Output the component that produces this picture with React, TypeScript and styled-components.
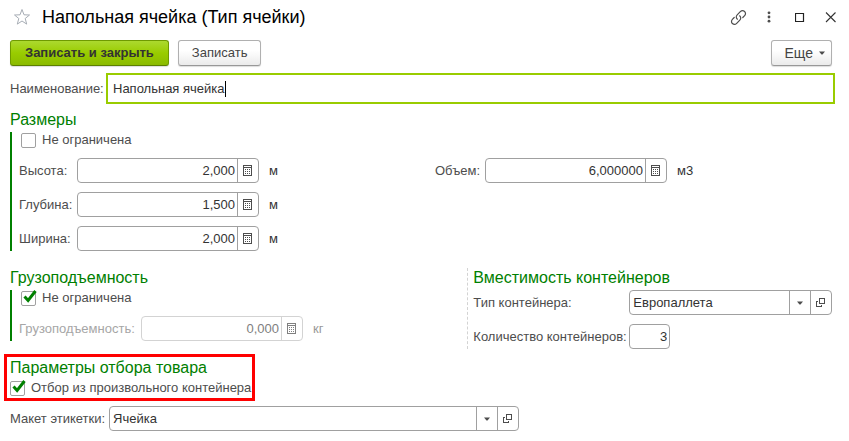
import React, { useState } from "react";
import styled, { createGlobalStyle, css } from "styled-components";

const GlobalStyle = createGlobalStyle`
  *, *::before, *::after { box-sizing: border-box; }
  body { margin: 0; background: #fff; }
  body, button, input, select {
    font-family: "Liberation Sans", Arial, sans-serif;
    font-size: 13px;
    line-height: 16px;
    color: #333;
  }
`;

const green = "#008000";
const lime = "#99cc00";
const line = "#a0a0a0";

const Form = styled.form`
  display: flex;
  flex-direction: column;
  padding: 4px 14px 10px 10px;
`;

const TitleBar = styled.header`
  display: flex;
  align-items: center;
  height: 26px;
  margin-bottom: 10px;
`;

const Title = styled.h1`
  flex: 1;
  margin: 0 0 0 8px;
  font-size: 18px;
  line-height: 24px;
  font-weight: 400;
  color: #000;
`;

const IconButton = styled.button`
  display: flex;
  align-items: center;
  justify-content: center;
  width: 24px;
  height: 24px;
  padding: 0;
  border: 0;
  background: none;
  color: #4d4d4d;
`;

const WindowButtons = styled.div`
  display: flex;
  gap: 7px;
  margin-right: -8px;
`;

const Toolbar = styled.div`
  display: flex;
  gap: 9px;
  margin-bottom: 7px;
  padding-right: 3px;
`;

const Button = styled.button<{ $primary?: boolean; $end?: boolean }>`
  display: flex;
  align-items: center;
  justify-content: center;
  gap: 6px;
  height: 26px;
  padding: 0 13px;
  border: 1px solid #b0b0b0;
  border-bottom-color: #989898;
  border-radius: 3px;
  background: linear-gradient(#fff 40%, #ebebeb);
  box-shadow: 0 1px 1px #ddd;
  color: #444;
  ${(p) =>
    p.$primary &&
    css`
      padding: 0 14px;
      border-color: #6f9a00;
      border-bottom-color: #5c7f00;
      background: linear-gradient(#acd92f, #99cc00 50%, #8bbb00);
      font-weight: 700;
      color: #333;
    `}
  ${(p) =>
    p.$end &&
    css`
      margin-left: auto;
      padding: 0 6px 0 13px;
      font-size: 14px;
    `}
`;

const Row = styled.div`
  display: flex;
  align-items: center;
`;

const Label = styled.label<{ $width?: number; $muted?: boolean }>`
  flex: none;
  width: ${(p) => (p.$width ? p.$width + "px" : "auto")};
  white-space: nowrap;
  color: ${(p) => (p.$muted ? "#a6a6a6" : "#4d4d4d")};
`;

const NameBox = styled.div`
  display: flex;
  align-items: center;
  flex: 1;
  min-width: 0;
  height: 31px;
  padding: 0 5px;
  border: 2px solid ${lime};
`;

const NameInput = styled.input`
  field-sizing: content;
  min-width: 0;
  padding: 0;
  border: 0;
  outline: 0;
  background: none;
  caret-color: transparent;
`;

const Caret = styled.span`
  width: 1px;
  height: 16px;
  background: #000;
`;

const Heading = styled.h2`
  margin: 0;
  font-size: 16px;
  line-height: 20px;
  font-weight: 400;
  color: ${green};
`;

const Section = styled.section`
  margin-top: 6px;
`;

const Barred = styled.div`
  margin-top: 2px;
  padding-left: 7px;
  border-left: 2px solid ${green};
`;

const Split = styled.div<{ $columns: string }>`
  display: grid;
  grid-template-columns: ${(p) => p.$columns};
  align-items: start;
`;

const Stack = styled.div`
  display: flex;
  flex-direction: column;
  gap: 9px;
`;

const CheckLabel = styled.label<{ $indent?: boolean }>`
  display: flex;
  align-items: center;
  gap: 6px;
  height: 16px;
  margin-left: ${(p) => (p.$indent ? "2px" : "0")};
  color: #4d4d4d;
`;

const CheckBox = styled.span`
  position: relative;
  width: 15px;
  height: 15px;
  svg {
    position: absolute;
    left: 0;
    top: -2px;
    pointer-events: none;
  }
`;

const CheckInput = styled.input`
  appearance: none;
  display: block;
  width: 15px;
  height: 15px;
  margin: 0;
  border: 1px solid ${line};
  border-radius: 2px;
  background: #fff;
`;

const Field = styled.div<{ $width?: number; $muted?: boolean }>`
  display: flex;
  flex: none;
  width: ${(p) => (p.$width ? p.$width + "px" : "auto")};
  height: 25px;
  border: 1px solid ${(p) => (p.$muted ? "#d3d3d3" : line)};
  border-radius: 4px;
  background: #fff;
  color: ${(p) => (p.$muted ? "#808080" : "#4d4d4d")};
`;

const FieldInput = styled.input<{ $number?: boolean }>`
  flex: 1;
  min-width: 0;
  padding: 0 ${(p) => (p.$number ? "2px" : "3px")};
  border: 0;
  outline: 0;
  background: none;
  text-align: ${(p) => (p.$number ? "right" : "left")};
  &:disabled { color: #808080; }
`;

const FieldButton = styled.button`
  display: flex;
  align-items: center;
  justify-content: center;
  flex: none;
  width: 21px;
  padding: 0 1px 0 0;
  border: 0;
  border-left: 1px solid ${line};
  background: none;
  color: inherit;
  &:disabled { border-color: #d3d3d3; }
`;

const Unit = styled.span<{ $muted?: boolean }>`
  margin-left: 10px;
  color: ${(p) => (p.$muted ? "#999" : "#333")};
`;

const Containers = styled.section`
  margin-left: -1px;
  padding-left: 5px;
  border-left: 1px dashed #d3d3d3;
`;

const Highlight = styled.section`
  display: flex;
  flex-direction: column;
  gap: 2px;
  align-self: flex-start;
  margin: 5px 0 5px -6px;
  padding: 1px 1px 2px 3px;
  border: 3px solid #ff0000;
`;

const Star = () => (
  <svg width="18" height="18" viewBox="0 0 18 18" fill="none" stroke="#a7adb5" aria-hidden="true">
    <path d="M9 1.5l2 5.300 5.500.2-4.300 3.500 1.500 5.600L9 13l-4.700 3.100 1.500-5.600L1.500 7l5.500-.2z" />
  </svg>
);

const LinkIcon = () => (
  <svg width="17" height="17" viewBox="0 0 17 17" fill="none" stroke="currentColor" strokeWidth="1.2" strokeLinecap="round" aria-hidden="true">
    <path d="M7.400 10.200C5.900 8.900 5.900 7.100 7.200 5.800L10.300 2.700c1.300-1.300 3.100-1.300 4.300-.2s1.200 3 0 4.200l-1.800 1.800" />
    <path d="M9.600 6.800c1.500 1.300 1.500 3.100.2 4.400l-3.100 3.100c-1.300 1.300-3.100 1.300-4.300.2s-1.200-3 0-4.200l1.800-1.800" />
  </svg>
);

const DotsIcon = () => (
  <svg width="4" height="12" viewBox="0 0 4 12" fill="currentColor" aria-hidden="true">
    <circle cx="2" cy="1.800" r="1.400" />
    <circle cx="2" cy="6" r="1.400" />
    <circle cx="2" cy="10.200" r="1.400" />
  </svg>
);

const SquareIcon = () => (
  <svg width="10" height="10" viewBox="0 0 10 10" fill="none" stroke="#222" aria-hidden="true">
    <path d="M.5 1.500h8v8h-8z" strokeWidth="1.200" />
  </svg>
);

const CloseIcon = () => (
  <svg width="12" height="12" viewBox="0 0 12 12" stroke="#333" strokeWidth="1.100" aria-hidden="true">
    <path d="M1 1.500l9.500 9.500M10.500 1.500L1 11" />
  </svg>
);

const Arrow = () => (
  <svg width="6" height="4" viewBox="0 0 6 4" fill="#4d4d4d" aria-hidden="true">
    <path d="M0 .5h6L3.500 3.500h-1z" />
  </svg>
);

const CalcIcon = () => (
  <svg width="9" height="11" viewBox="0 0 9 11" aria-hidden="true" shapeRendering="crispEdges">
    <path d="M.5.500h8v10h-8zM.5 2.500h8" fill="none" stroke="currentColor" />
    <path d="M2 4h1v1H2zM4 4h1v1H4zM6 4h1v1H6zM2 6h1v1H2zM4 6h1v1H4zM6 6h1v1H6zM2 8h1v1H2zM4 8h1v1H4zM6 8h1v1H6z" fill="currentColor" />
  </svg>
);

const OpenIcon = () => (
  <svg width="9" height="9" viewBox="0 0 9 9" fill="none" stroke="currentColor" aria-hidden="true" shapeRendering="crispEdges">
    <path d="M3.500.5h5v5h-5zM2 3.500H.5v5h5V7" />
  </svg>
);

const Tick = () => (
  <svg width="17" height="15" viewBox="0 0 17 15" fill="none" stroke={green} strokeWidth="3" aria-hidden="true">
    <path d="M3.500 7.500l3.600 4L14.500 2" />
  </svg>
);

function Check({ text, initial = false, indent }: { text: string; initial?: boolean; indent?: boolean }) {
  const [on, setOn] = useState(initial);
  return (
    <CheckLabel $indent={indent}>
      <CheckBox>
        <CheckInput type="checkbox" checked={on} onChange={() => setOn(!on)} />
        {on && <Tick />}
      </CheckBox>
      {text}
    </CheckLabel>
  );
}

type NumberRowProps = {
  id: string;
  label: string;
  labelWidth: number;
  width: number;
  value: string;
  unit: string;
  disabled?: boolean;
};

function NumberRow({ id, label, labelWidth, width, value, unit, disabled }: NumberRowProps) {
  return (
    <Row>
      <Label htmlFor={id} $width={labelWidth} $muted={disabled}>{label}</Label>
      <Field $width={width} $muted={disabled}>
        <FieldInput id={id} $number defaultValue={value} disabled={disabled} />
        <FieldButton type="button" aria-label="Калькулятор" disabled={disabled}><CalcIcon /></FieldButton>
      </Field>
      <Unit $muted={disabled}>{unit}</Unit>
    </Row>
  );
}

function ReferenceField({ id, width, value }: { id: string; width: number; value: string }) {
  return (
    <Field $width={width}>
      <FieldInput id={id} defaultValue={value} />
      <FieldButton type="button" aria-label="Выбрать"><Arrow /></FieldButton>
      <FieldButton type="button" aria-label="Открыть"><OpenIcon /></FieldButton>
    </Field>
  );
}

const Spaced = styled(Split)`
  margin-top: 10px;
`;

const Groups = styled(Split)`
  margin-top: 17px;
`;

const Capacity = styled.div`
  margin-top: 10px;
`;

const ContainerRows = styled(Stack)`
  margin-top: 2px;
`;

export default function App() {
  const [name, setName] = useState("Напольная ячейка");
  return (
    <>
      <GlobalStyle />
      <Form onSubmit={(e) => e.preventDefault()}>
        <TitleBar>
          <IconButton type="button" aria-label="В избранное"><Star /></IconButton>
          <Title>Напольная ячейка (Тип ячейки)</Title>
          <WindowButtons>
            <IconButton type="button" aria-label="Ссылка"><LinkIcon /></IconButton>
            <IconButton type="button" aria-label="Меню"><DotsIcon /></IconButton>
            <IconButton type="button" aria-label="Развернуть"><SquareIcon /></IconButton>
            <IconButton type="button" aria-label="Закрыть"><CloseIcon /></IconButton>
          </WindowButtons>
        </TitleBar>

        <Toolbar>
          <Button type="submit" $primary>Записать и закрыть</Button>
          <Button type="button">Записать</Button>
          <Button type="button" $end>Еще <Arrow /></Button>
        </Toolbar>

        <Row>
          <Label htmlFor="name" $width={96}>Наименование:</Label>
          <NameBox>
            <NameInput id="name" value={name} onChange={(e) => setName(e.target.value)} />
            <Caret />
          </NameBox>
        </Row>

        <Section>
          <Heading>Размеры</Heading>
          <Barred>
            <Check text="Не ограничена" indent />
            <Spaced $columns="minmax(0, 26fr) minmax(0, 25fr)">
              <Stack>
                <NumberRow id="height" label="Высота:" labelWidth={58} width={182} value="2,000" unit="м" />
                <NumberRow id="depth" label="Глубина:" labelWidth={58} width={182} value="1,500" unit="м" />
                <NumberRow id="width" label="Ширина:" labelWidth={58} width={182} value="2,000" unit="м" />
              </Stack>
              <NumberRow id="volume" label="Объем:" labelWidth={50} width={182} value="6,000000" unit="м3" />
            </Spaced>
          </Barred>
        </Section>

        <Groups $columns="minmax(0, 5fr) minmax(0, 4fr)">
          <section>
            <Heading>Грузоподъемность</Heading>
            <Barred>
              <Check text="Не ограничена" initial indent />
              <Capacity>
                <NumberRow id="capacity" label="Грузоподъемность:" labelWidth={122} width={162} value="0,000" unit="кг" disabled />
              </Capacity>
            </Barred>
          </section>
          <Containers>
            <Heading>Вместимость контейнеров</Heading>
            <ContainerRows>
              <Row>
                <Label htmlFor="type" $width={156}>Тип контейнера:</Label>
                <ReferenceField id="type" width={203} value="Европаллета" />
              </Row>
              <Row>
                <Label htmlFor="count" $width={156}>Количество контейнеров:</Label>
                <Field $width={41}><FieldInput id="count" $number defaultValue="3" /></Field>
              </Row>
            </ContainerRows>
          </Containers>
        </Groups>

        <Highlight>
          <Heading>Параметры отбора товара</Heading>
          <Check text="Отбор из произвольного контейнера" initial />
        </Highlight>

        <Row>
          <Label htmlFor="layout" $width={99}>Макет этикетки:</Label>
          <ReferenceField id="layout" width={410} value="Ячейка" />
        </Row>
      </Form>
    </>
  );
}
